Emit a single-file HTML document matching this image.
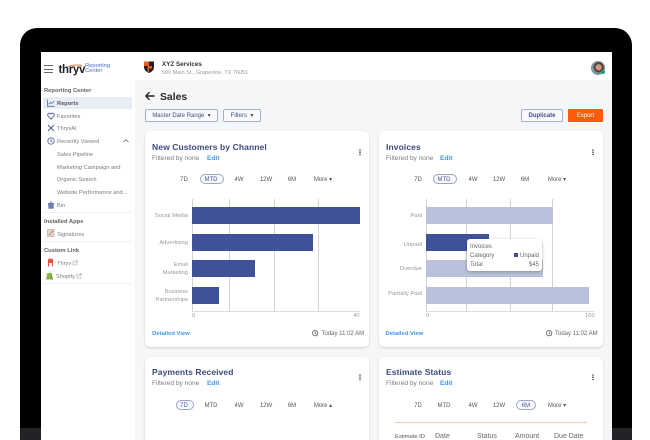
<!DOCTYPE html>
<html><head><meta charset="utf-8">
<style>
html,body{margin:0;padding:0;background:#fff}
#p{position:relative;width:650px;height:440px;overflow:hidden;background:#fff;font-family:"Liberation Sans",sans-serif;color:#555;filter:blur(.3px)}
#p div{position:absolute;white-space:nowrap}
svg{position:absolute;overflow:visible}
.side{font-size:5.6px;color:#77797f;line-height:8px;letter-spacing:.05px;margin-top:.5px}
.head{font-size:5.8px;color:#606268;font-weight:bold;line-height:8px;margin-top:.5px}
.card{background:#fff;border-radius:5px;box-shadow:0 1px 2px rgba(0,0,0,.16)}
.t{font-size:8.5px;font-weight:bold;color:#3d4a7e;line-height:12px;letter-spacing:.1px;margin-top:1px}
.f{font-size:6.6px;color:#7c7c7c;line-height:8px;margin-top:1px}
.e{font-size:6.6px;color:#3f97ee;font-weight:bold;line-height:8px;margin-top:1px}
.tab{font-size:6px;color:#555;line-height:8px;text-align:center;margin-top:1px}
.pill{border:1px solid #9aa5cc;border-radius:6px;background:#f8f9fd;height:8px}
.lab{font-size:5.8px;color:#9a9a9a;line-height:8px;text-align:right;margin-top:1px}
.g{background:#d4d4d6;width:1px}
.bar{background:#3f5299;height:17px}
.l{background:#b9c2da;height:17px}
.btn{border:1px solid #a5aed0;border-radius:2px;box-sizing:border-box;font-size:6px;color:#3f4d86;text-align:center;background:#fbfbfe}
.sm{font-size:6px;color:#666;line-height:8px;margin-top:1px}
.dv{font-size:5.9px;color:#3f97ee;font-weight:bold;line-height:8px;margin-top:1px}
</style></head>
<body>
<div id="p">
<!-- device -->
<div style="left:20px;top:28px;width:612px;height:430px;background:#000;border-radius:17px 17px 0 0"></div>
<div style="left:20px;top:428px;width:21px;height:12px;background:#222326"></div>
<div style="left:612px;top:428px;width:20px;height:12px;background:#222326"></div>
<div style="left:41px;top:52px;width:571px;height:388px;background:#f5f6f8"></div>
<!-- sidebar -->
<div style="left:41px;top:52px;width:94px;height:388px;background:#fff"></div>
<div style="left:43.500px;top:65px;width:9px;height:1.300px;background:#666"></div>
<div style="left:43.500px;top:68.500px;width:9px;height:1.300px;background:#666"></div>
<div style="left:43.500px;top:72px;width:9px;height:1.300px;background:#666"></div>
<div style="left:58.500px;top:63px;font-size:11.500px;font-weight:bold;color:#222;line-height:14px;letter-spacing:-.3px">thryv</div>
<svg style="left:68px;top:64px" width="14" height="5"><path d="M0 2.500 Q7 0 14 1.500" stroke="#ef6a2a" stroke-width=".9" fill="none"/></svg>
<div style="left:85px;top:64px;font-size:5.800px;line-height:5.400px;color:#4a6fc4">Reporting<br>Center</div>
<div class="head" style="left:44px;top:86px">Reporting Center</div>
<div style="left:43px;top:97px;width:89px;height:12px;background:#e9edf6;border-radius:1px"></div>
<svg style="left:47px;top:99px" width="8" height="8" viewBox="0 0 8 8" fill="none" stroke="#5a6aa8" stroke-width=".8"><path d="M.5 .5V7.300H7.600M1.800 5.200L3.500 3.400L4.900 4.500L7.200 2"/></svg>
<div class="side" style="left:57px;top:99px;color:#555;font-weight:bold">Reports</div>
<svg style="left:47px;top:112px" width="8" height="8" viewBox="0 0 8 8" fill="none" stroke="#5a6aa8" stroke-width="1"><path d="M4 7L.9 3.800C-.2 2 2.600 .2 4 2C5.400 .2 8.200 2 7.100 3.800Z"/></svg>
<div class="side" style="left:57px;top:112px">Favorites</div>
<svg style="left:47px;top:124px" width="8" height="8" viewBox="0 0 8 8" fill="none" stroke="#5a6aa8" stroke-width="1.200"><path d="M1 1L7 7M7 1L1 7"/></svg>
<div class="side" style="left:57px;top:124px">ThryvAI</div>
<svg style="left:47px;top:137px" width="8" height="8" viewBox="0 0 8 8" fill="none" stroke="#5a6aa8" stroke-width=".9"><circle cx="4" cy="4" r="3.200"/><path d="M4 2V4.200L5.400 5"/></svg>
<div class="side" style="left:57px;top:137px">Recently Viewed</div>
<svg style="left:123px;top:139px" width="6" height="4" fill="none" stroke="#666" stroke-width=".8"><path d="M.5 3L3 .8L5.500 3"/></svg>
<div class="side" style="left:57px;top:150px">Sales Pipeline</div>
<div class="side" style="left:57px;top:163px">Marketing Campaign and</div>
<div class="side" style="left:57px;top:175px">Organic Search</div>
<div class="side" style="left:57px;top:188px">Website Performance and...</div>
<svg style="left:47px;top:201px" width="8" height="8" viewBox="0 0 8 8"><path d="M1 2H7L6.500 7.800H1.500Z M2.500 .6H5.500V1.600H2.500Z" fill="#6d7db5"/></svg>
<div class="side" style="left:57px;top:201px">Bin</div>
<div style="left:43px;top:212px;width:89px;height:1px;background:#f0f0f2"></div>
<div class="head" style="left:44px;top:217px">Installed Apps</div>
<svg style="left:47px;top:229px" width="8" height="8" viewBox="0 0 8 8"><rect x=".5" y=".5" width="6.500" height="7" fill="#d8d8d8" stroke="#999" stroke-width=".5"/><path d="M2 6L6.500 1.500" stroke="#e8824a" stroke-width="1"/></svg>
<div class="side" style="left:57px;top:230px">Signatures</div>
<div style="left:43px;top:241px;width:89px;height:1px;background:#f0f0f2"></div>
<div class="head" style="left:44px;top:246px">Custom Link</div>
<svg style="left:47px;top:258px" width="7" height="9" viewBox="0 0 7 9"><path d="M1 1.500Q3.500 -.5 6 1.500L6 5H1Z" fill="#e8503a"/><path d="M1.500 5V8.500M5.500 5V8.500" stroke="#e8503a" stroke-width="1"/></svg>
<div class="side" style="left:57px;top:259px">Thryv</div>
<svg style="left:72px;top:260px" width="6" height="6" fill="none" stroke="#999" stroke-width=".6"><path d="M1 1H2.800M1 1V5H5V3.200M3 3L5.200 .8M3.600 .8H5.200V2.400"/></svg>
<svg style="left:46px;top:271px" width="8" height="9" viewBox="0 0 8 9"><path d="M1 2.500L5.500 1.500L7 8.500L0 8.500Z" fill="#8bb53f"/><path d="M5 1.600L7 8.500H5.600Z" fill="#5e8e3e"/></svg>
<div class="side" style="left:56px;top:272px">Shopify</div>
<svg style="left:76px;top:273px" width="6" height="6" fill="none" stroke="#999" stroke-width=".6"><path d="M1 1H2.800M1 1V5H5V3.200M3 3L5.200 .8M3.600 .8H5.200V2.400"/></svg>
<div style="left:43px;top:283px;width:89px;height:1px;background:#f0f0f2"></div>
<!-- header -->
<div style="left:135px;top:52px;width:477px;height:28px;background:#fff"></div>
<svg style="left:143px;top:60px" width="12" height="14" viewBox="0 0 12 14"><path d="M1 1.500H11V7.500Q11 11 6 13Q1 11 1 7.500Z" fill="#222"/><path d="M1 1.500H6V6H1ZM6 6H9V8.500H6V12H4.600V6Z" fill="#f0591e"/></svg>
<div style="left:162px;top:61px;font-size:6.300px;font-weight:bold;color:#333;line-height:8px">XYZ Services</div>
<div style="left:162px;top:68.500px;font-size:5.500px;color:#9a9a9a;line-height:8px">500 Main St., Grapevine, TX 76051</div>
<div style="left:591px;top:61px;width:14px;height:14px;border-radius:50%;background:radial-gradient(circle at 55% 45%,#c79a80 0 3px,#5a3f35 3.200px 5px,#7d97a5 5.200px)"></div>
<div style="left:601px;top:70px;width:4px;height:4px;border-radius:50%;background:#1aa37a"></div>
<!-- title -->
<svg style="left:145px;top:91px" width="10" height="10" viewBox="0 0 10 10" fill="none" stroke="#222" stroke-width="1.400"><path d="M9.500 5H1M4.500 1.200L.9 5L4.500 8.800"/></svg>
<div style="left:160px;top:90.500px;font-size:10.400px;font-weight:bold;color:#2b2b2b;line-height:13px">Sales</div>
<div class="btn" style="left:145px;top:109px;width:73px;height:13px;line-height:13px">Master Date Range &nbsp;▾</div>
<div class="btn" style="left:223px;top:109px;width:38px;height:13px;line-height:13px">Filters &nbsp;▾</div>
<div class="btn" style="left:521px;top:109px;width:42px;height:13px;line-height:13px;font-weight:bold">Duplicate</div>
<div style="left:568px;top:109px;width:35px;height:13px;background:#ff5a0a;border-radius:1px;color:#fff;font-size:6px;line-height:15px;text-align:center">Export</div>

<!-- card 1 -->
<div class="card" style="left:145px;top:131px;width:224px;height:216px"></div>
<div class="t" style="left:152px;top:140px">New Customers by Channel</div>
<div class="f" style="left:152px;top:153.500px">Filtered by none</div>
<div class="e" style="left:207px;top:153.500px">Edit</div>
<svg style="left:359px;top:149px" width="3" height="7"><circle cx="1" cy="1" r=".8" fill="#444"/><circle cx="1" cy="3.200" r=".8" fill="#444"/><circle cx="1" cy="5.400" r=".8" fill="#444"/></svg>
<div class="pill" style="left:200px;top:174px;width:22px"></div>
<div class="tab" style="left:174px;top:175px;width:20px">7D</div>
<div class="tab" style="left:201px;top:175px;width:20px;color:#4a5a96">MTD</div>
<div class="tab" style="left:229px;top:175px;width:20px">4W</div>
<div class="tab" style="left:256px;top:175px;width:20px">12W</div>
<div class="tab" style="left:282px;top:175px;width:20px">6M</div>
<div class="tab" style="left:310px;top:175px;width:26px">More ▾</div>

<div class="g" style="left:192px;top:199px;height:112px"></div>
<div class="g" style="left:229px;top:199px;height:112px"></div>
<div class="g" style="left:274px;top:199px;height:112px"></div>
<div class="g" style="left:318px;top:199px;height:112px"></div>
<div style="left:192px;top:311px;width:168px;height:1px;background:#dcdcdf"></div>
<div class="bar" style="left:192px;top:207px;width:168px"></div>
<div class="bar" style="left:192px;top:233.500px;width:120.500px"></div>
<div class="bar" style="left:192px;top:260px;width:63px"></div>
<div class="bar" style="left:192px;top:286.500px;width:26.500px"></div>
<div class="lab" style="left:140px;width:48px;top:211px">Social Media</div>
<div class="lab" style="left:140px;width:48px;top:238px">Advertising</div>
<div class="lab" style="left:140px;width:48px;top:260px">Email<br>Marketing</div>
<div class="lab" style="left:140px;width:48px;top:287px">Business<br>Partnerships</div>
<div class="lab" style="left:192px;top:311px">0</div>
<div class="lab" style="left:353px;top:311px">40</div>
<div class="dv" style="left:152px;top:329px">Detailed View</div>
<svg style="left:312px;top:330px" width="7" height="7" fill="none" stroke="#444" stroke-width=".7"><circle cx="3.200" cy="3.200" r="2.700"/><path d="M3.200 1.600V3.400L4.400 4"/></svg>
<div class="sm" style="left:321.500px;top:329px">Today 11:02 AM</div>

<!-- card 2 -->
<div class="card" style="left:379px;top:131px;width:224px;height:216px"></div>
<div class="t" style="left:386px;top:140px">Invoices</div>
<div class="f" style="left:386px;top:153.500px">Filtered by none</div>
<div class="e" style="left:440px;top:153.500px">Edit</div>
<svg style="left:592px;top:149px" width="3" height="7"><circle cx="1" cy="1" r=".8" fill="#444"/><circle cx="1" cy="3.200" r=".8" fill="#444"/><circle cx="1" cy="5.400" r=".8" fill="#444"/></svg>
<div class="pill" style="left:433px;top:174px;width:22px"></div>
<div class="tab" style="left:408px;top:175px;width:20px">7D</div>
<div class="tab" style="left:434px;top:175px;width:20px;color:#4a5a96">MTD</div>
<div class="tab" style="left:463px;top:175px;width:20px">4W</div>
<div class="tab" style="left:489px;top:175px;width:20px">12W</div>
<div class="tab" style="left:515px;top:175px;width:20px">6M</div>
<div class="tab" style="left:544px;top:175px;width:26px">More ▾</div>

<div class="g" style="left:426px;top:199px;height:112px"></div>
<div class="g" style="left:466px;top:199px;height:112px"></div>
<div class="g" style="left:510px;top:199px;height:112px"></div>
<div class="g" style="left:552px;top:199px;height:112px"></div>
<div style="left:426px;top:311px;width:168px;height:1px;background:#dcdcdf"></div>
<div class="l" style="left:426px;top:207px;width:127px"></div>
<div class="bar" style="left:426px;top:233.500px;width:63px"></div>
<div class="l" style="left:426px;top:260px;width:117px"></div>
<div class="l" style="left:426px;top:286.500px;width:162.500px"></div>
<div class="lab" style="left:375px;width:47px;top:211px">Paid</div>
<div class="lab" style="left:375px;width:47px;top:240px">Unpaid</div>
<div class="lab" style="left:375px;width:47px;top:264px">Overdue</div>
<div class="lab" style="left:375px;width:47px;top:289px">Partially Paid</div>
<div class="lab" style="left:426px;top:311px">0</div>
<div class="lab" style="left:585px;top:311px">160</div>
<div style="left:467px;top:239px;width:75px;height:32px;background:#fff;border-radius:3px;box-shadow:0 1px 3px rgba(0,0,0,.28)"></div>
<div class="sm" style="left:470px;top:242px">Invoices</div>
<div class="sm" style="left:470px;top:251px">Category</div>
<div class="sm" style="left:470px;top:259.500px">Total</div>
<div style="left:514px;top:252.500px;width:4px;height:4px;background:#3f5299"></div>
<div class="sm" style="left:520px;top:251px">Unpaid</div>
<div class="sm" style="left:529px;top:259.500px">$45</div>
<div class="dv" style="left:385.500px;top:329px">Detailed View</div>
<svg style="left:546px;top:330px" width="7" height="7" fill="none" stroke="#444" stroke-width=".7"><circle cx="3.200" cy="3.200" r="2.700"/><path d="M3.200 1.600V3.400L4.400 4"/></svg>
<div class="sm" style="left:555px;top:329px">Today 11:02 AM</div>

<!-- card 3 -->
<div class="card" style="left:145px;top:357px;width:224px;height:100px"></div>
<div class="t" style="left:152px;top:364.500px">Payments Received</div>
<div class="f" style="left:152px;top:378.500px">Filtered by none</div>
<div class="e" style="left:207px;top:378.500px">Edit</div>
<svg style="left:359px;top:374px" width="3" height="7"><circle cx="1" cy="1" r=".8" fill="#444"/><circle cx="1" cy="3.200" r=".8" fill="#444"/><circle cx="1" cy="5.400" r=".8" fill="#444"/></svg>
<div class="pill" style="left:176px;top:400px;width:16px"></div>
<div class="tab" style="left:174px;top:401px;width:20px;color:#4a5a96">7D</div>
<div class="tab" style="left:201px;top:401px;width:20px">MTD</div>
<div class="tab" style="left:229px;top:401px;width:20px">4W</div>
<div class="tab" style="left:256px;top:401px;width:20px">12W</div>
<div class="tab" style="left:282px;top:401px;width:20px">6M</div>
<div class="tab" style="left:310px;top:401px;width:26px">More ▴</div>

<!-- card 4 -->
<div class="card" style="left:379px;top:357px;width:224px;height:100px"></div>
<div class="t" style="left:386px;top:364.500px">Estimate Status</div>
<div class="f" style="left:386px;top:378.500px">Filtered by none</div>
<div class="e" style="left:440px;top:378.500px">Edit</div>
<svg style="left:592px;top:374px" width="3" height="7"><circle cx="1" cy="1" r=".8" fill="#444"/><circle cx="1" cy="3.200" r=".8" fill="#444"/><circle cx="1" cy="5.400" r=".8" fill="#444"/></svg>
<div class="pill" style="left:516px;top:400px;width:18px"></div>
<div class="tab" style="left:408px;top:401px;width:20px">7D</div>
<div class="tab" style="left:434px;top:401px;width:20px">MTD</div>
<div class="tab" style="left:463px;top:401px;width:20px">4W</div>
<div class="tab" style="left:489px;top:401px;width:20px">12W</div>
<div class="tab" style="left:516px;top:401px;width:20px;color:#4a5a96">6M</div>
<div class="tab" style="left:544px;top:401px;width:26px">More ▾</div>
<div style="left:395px;top:421.500px;width:192px;height:1px;background:#f7c9ae"></div>
<div class="sm" style="left:395px;top:431.500px;font-size:5.800px;color:#555">Estimate ID</div>
<div class="sm" style="left:435px;top:431.500px;font-size:7px">Date</div>
<div class="sm" style="left:477px;top:431.500px;font-size:7px">Status</div>
<div class="sm" style="left:515px;top:431.500px;font-size:7px">Amount</div>
<div class="sm" style="left:554px;top:431.500px;font-size:7px">Due Date</div>
</div>
</body></html>
